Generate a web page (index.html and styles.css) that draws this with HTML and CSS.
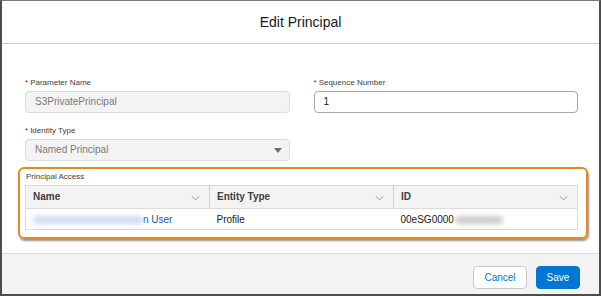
FILE: index.html
```html
<!DOCTYPE html>
<html>
<head>
    <title>Edit Principal</title>
    <link rel="stylesheet" href="styles.css">
</head>
<body>
    <div class="modal">
        <div class="modal-header">Edit Principal</div>

        <div class="modal-body">
            <div class="form-grid">
                <div class="field">
                    <label class="field-label"><span class="req">*</span>Parameter Name</label>
                    <div class="input input-disabled">S3PrivatePrincipal</div>
                </div>
                <div class="field">
                    <label class="field-label"><span class="req">*</span>Sequence Number</label>
                    <div class="input">1</div>
                </div>
                <div class="field">
                    <label class="field-label"><span class="req">*</span>Identity Type</label>
                    <div class="input input-disabled select">
                        Named Principal
                        <span class="caret"></span>
                    </div>
                </div>
            </div>

            <!-- highlighted section -->
            <div class="highlight">
                <div class="section-label">Principal Access</div>
                <table class="grid-table">
                    <tr>
                        <th><span>Name</span><svg class="chev" viewBox="0 0 10 6"><path d="M1 1 L5 5 L9 1"/></svg></th>
                        <th><span>Entity Type</span><svg class="chev" viewBox="0 0 10 6"><path d="M1 1 L5 5 L9 1"/></svg></th>
                        <th><span>ID</span><svg class="chev" viewBox="0 0 10 6"><path d="M1 1 L5 5 L9 1"/></svg></th>
                    </tr>
                    <tr>
                        <!-- redacted parts are drawn as blurred blobs -->
                        <td><a class="link"><span class="redact redact-link"></span>n User</a></td>
                        <td>Profile</td>
                        <td>00eSG0000<span class="redact redact-id"></span></td>
                    </tr>
                </table>
            </div>
        </div>

        <div class="modal-footer">
            <button class="btn btn-neutral">Cancel</button>
            <button class="btn btn-brand">Save</button>
        </div>
    </div>
</body>
</html>
```

FILE: styles.css
```css
body { margin: 0; background: #fff; }
.modal { width: 601px; height: 296px; box-sizing: border-box; border: 2px solid #4d4d4d; border-top: 1px solid #7a7a7a; display: flex; flex-direction: column; background: #fff; font-family: "Liberation Sans", Arial, sans-serif; color: #181818; }
.modal-header { height: 42px; flex: none; border-bottom: 1px solid #c9c9c9; display: flex; align-items: center; justify-content: center; font-size: 14px; }
.modal-body { flex: 1; padding: 34px 21px 0 23px; }
.form-grid { display: grid; grid-template-columns: 1fr 1fr; column-gap: 24px; row-gap: 13px; }
.field-label { display: block; font-size: 8px; line-height: 10px; color: #3e3e3c; margin-bottom: 3px; }
.req { color: #ba0517; margin-right: 2px; }
.input { height: 22px; box-sizing: border-box; border: 1px solid #a8a8a8; border-radius: 4px; padding: 0 9px; font-size: 10px; line-height: 20px; color: #181818; background: #fff; }
.input-disabled { background: #f3f3f3; border-color: #dcdcdc; color: #7a7a7a; }
.select { position: relative; }
.caret { position: absolute; right: 7px; top: 8px; width: 0; height: 0; border-left: 4px solid transparent; border-right: 4px solid transparent; border-top: 5px solid #706e6b; }
.highlight { margin: 6px -10px 0 -7px; border: 2px solid #e8891c; border-radius: 6px; padding: 2px 8px 7px 5px; box-shadow: 1px 2px 2px rgba(60, 60, 60, 0.55); }
.section-label { font-size: 8px; line-height: 10px; color: #3e3e3c; margin: 1px 0 3px 1px; }
.grid-table { width: 100%; border-collapse: collapse; table-layout: fixed; border: 1px solid #dddbda; font-size: 10px; }
.grid-table th { background: #f3f3f3; height: 22px; padding: 0 9px 0 7px; text-align: left; font-weight: bold; color: #3e3e3c; border-right: 1px solid #d0d0d0; border-bottom: 1px solid #dddbda; }
.grid-table th span { float: left; line-height: 22px; }
.grid-table th:last-child { border-right: none; }
.chev { float: right; width: 9px; height: 6px; margin-top: 9px; fill: none; stroke: #8a8886; stroke-width: 1; }
.grid-table td { height: 20px; padding: 0 7px; color: #181818; }
.link { color: #0b5cab; }
.redact { display: inline-block; height: 8px; border-radius: 4px; filter: blur(2.5px); vertical-align: -1px; }
.redact-link { width: 110px; background: #ccdcf1; }
.redact-id { width: 48px; margin-left: 1px; background: #cbcbcb; }
.modal-footer { height: 41px; flex: none; border-top: 1px solid #dddbda; background: #f3f3f3; display: flex; justify-content: flex-end; align-items: flex-start; gap: 9px; padding: 12px 19px 0 0; box-sizing: border-box; }
.btn { height: 23px; border-radius: 4px; font-family: inherit; font-size: 10px; padding: 0; cursor: pointer; }
.btn-neutral { width: 54px; background: #fff; border: 1px solid #c9c9c9; color: #0176d3; }
.btn-brand { width: 44px; background: #0176d3; border: 1px solid #0176d3; color: #fff; }
```
